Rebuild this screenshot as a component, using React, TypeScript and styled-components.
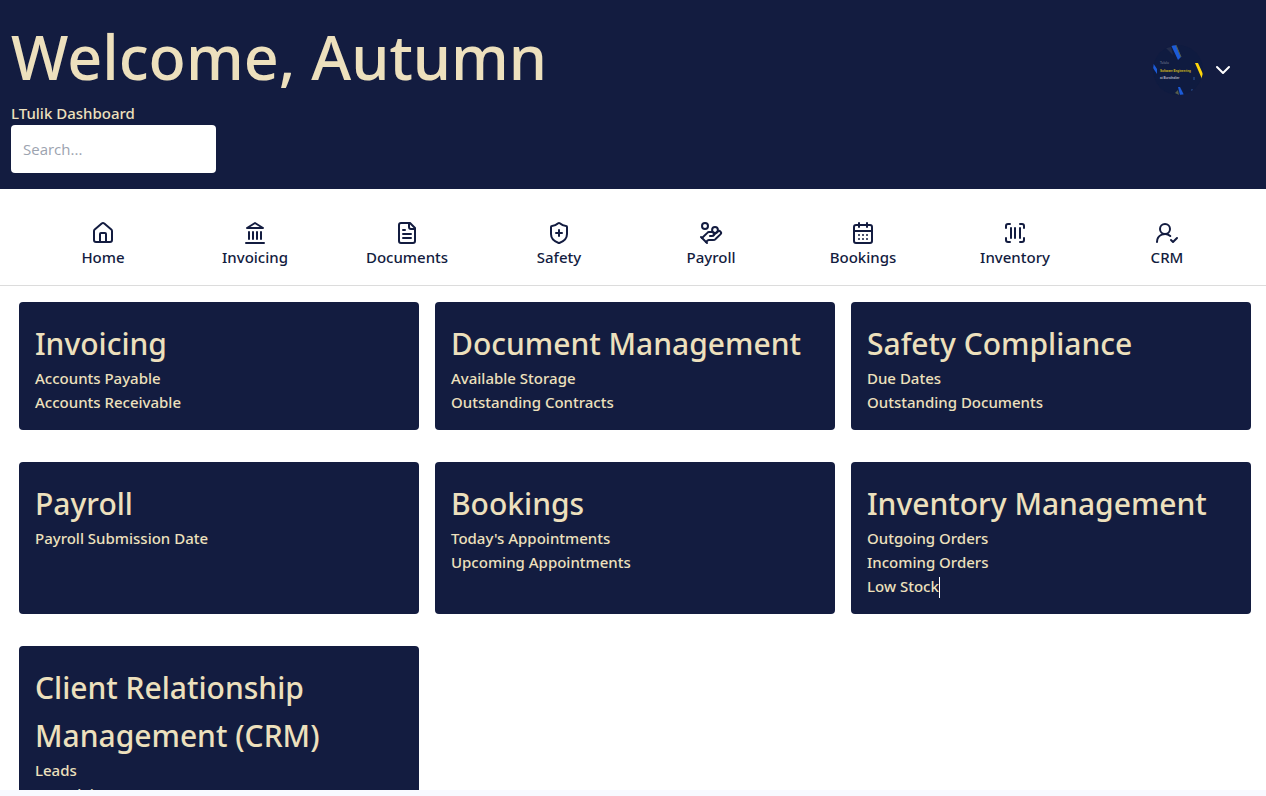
import React from "react";
import styled, { createGlobalStyle } from "styled-components";
import {
  CalendarDays,
  ChevronDown,
  HandCoins,
  ScanBarcode,
  ShieldPlus,
  UserRoundCheck,
} from "lucide-react";

const navy = "#131c40";
const cream = "#ede0bd";

const GlobalStyle = createGlobalStyle`
  *, *::before, *::after { box-sizing: border-box; }
  body {
    margin: 0;
    background: #fff;
    color: ${navy};
    font-family: "Segoe UI", "Noto Sans", sans-serif;
    font-size: 15px;
    line-height: 24px;
    font-weight: 500;
  }
`;

const Page = styled.div`
  display: flex;
  flex-direction: column;
  height: 100vh;
`;

const Header = styled.header`
  display: flex;
  justify-content: space-between;
  align-items: flex-start;
  padding: 13px 31px 16px 11px;
  background: ${navy};
  color: ${cream};
`;

const Intro = styled.div`
  display: flex;
  flex-direction: column;
  align-items: flex-start;
`;

const Welcome = styled.h1`
  margin: 0;
  font-size: 61px;
  line-height: 88px;
  font-weight: 500;
`;

const Search = styled.input`
  width: 205px;
  height: 48px;
  padding: 0 12px;
  border: 0;
  border-radius: 4px;
  background: #fff;
  color: ${navy};
  font-family: "Segoe UI", "Open Sans", sans-serif;
  font-size: 15px;
  font-weight: 400;
  &::placeholder { color: #9ca3af; opacity: 1; }
`;

const Account = styled.button`
  display: flex;
  align-items: center;
  gap: 8px;
  margin-top: 32px;
  padding: 0;
  border: 0;
  background: none;
  color: #fff;
  cursor: pointer;
`;

const Nav = styled.nav`
  display: grid;
  grid-template-columns: repeat(8, 1fr);
  padding: 32px 23px 16px 27px;
  border-bottom: 1px solid #dcdcdc;
`;

const NavLink = styled.a`
  display: flex;
  flex-direction: column;
  align-items: center;
  color: inherit;
  text-decoration: none;
`;

const Cards = styled.main`
  flex: 1;
  min-height: 0;
  overflow: hidden;
  display: grid;
  grid-template-columns: repeat(3, 1fr);
  align-content: start;
  gap: 32px 16px;
  padding: 16px 15px 0 19px;
`;

const Card = styled.section`
  padding: 18px 16px 16px;
  border-radius: 4px;
  background: ${navy};
  color: ${cream};
`;

const CardTitle = styled.h2`
  margin: 0 0 -2px;
  font-size: 30px;
  line-height: 48px;
  font-weight: 500;
`;

const List = styled.ul`
  margin: 0;
  padding: 0;
  list-style: none;
`;

const Caret = styled.span`
  display: inline-block;
  width: 1px;
  height: 21px;
  vertical-align: middle;
  background: #fff;
`;

const Footer = styled.footer`
  flex: none;
  height: 6px;
  background: #f8f9ff;
`;

const Glyph = ({ children }: { children: React.ReactNode }) => (
  <svg width="24" height="24" viewBox="0 0 24 24" fill="none" stroke="currentColor"
    strokeWidth="2" strokeLinecap="round" strokeLinejoin="round" aria-hidden="true">
    {children}
  </svg>
);

const HomeIcon = () => (
  <Glyph>
    <path d="M15 21v-8a1 1 0 0 0-1-1h-4a1 1 0 0 0-1 1v8" />
    <path d="M3 10a2 2 0 0 1 .709-1.528l7-5.999a2 2 0 0 1 2.582 0l7 5.999A2 2 0 0 1 21 10v9a2 2 0 0 1-2 2H5a2 2 0 0 1-2-2z" />
  </Glyph>
);

const BankIcon = () => (
  <Glyph>
    <path d="M3 22h18M6 18v-7M10 18v-7M14 18v-7M18 18v-7" />
    <path d="M12 2l8 5H4z" />
  </Glyph>
);

const DocumentIcon = () => (
  <Glyph>
    <path d="M15 2H6a2 2 0 0 0-2 2v16a2 2 0 0 0 2 2h12a2 2 0 0 0 2-2V7Z" />
    <path d="M14 2v4a2 2 0 0 0 2 2h4M10 9H8M16 13H8M16 17H8" />
  </Glyph>
);

const Avatar = () => (
  <svg width="50" height="50" viewBox="0 0 50 50" aria-hidden="true">
    <defs>
      <clipPath id="avatar"><circle cx="25" cy="25" r="25" /></clipPath>
    </defs>
    <g clipPath="url(#avatar)">
      <rect width="50" height="50" fill="#0f1b40" />
      <path d="M13 3l5-1 2 8z" fill="#232c4b" />
      <path d="M18 0h5l5 12-3 3z" fill="#1c5bd8" />
      <path d="M23 0l5 12" stroke="#59604a" strokeWidth="1" />
      <path d="M0 18l4 6v5l-4-6z" fill="#1c5bd8" />
      <path d="M42 18h3l5 11-1 5z" fill="#ffd60a" />
      <path d="M25 42h2l4 8h-4z" fill="#1c5bd8" />
      <path d="M22 48l3-3 1 5z" fill="#565c4b" />
      <path d="M41 32v3M39 44v2" stroke="#31589d" strokeWidth="1" />
      <g fontFamily="Liberation Sans, sans-serif" fontWeight="700">
        <text x="7" y="19" fontSize="3" fill="#5e6880">Tululu</text>
        <text x="7" y="27" fontSize="3" fill="#d6bd18">Software Engineering</text>
        <text x="7" y="34" fontSize="3" fill="#b3b8c4">at Bursthalter</text>
      </g>
    </g>
  </svg>
);

const navItems = [
  { label: "Home", icon: <HomeIcon /> },
  { label: "Invoicing", icon: <BankIcon /> },
  { label: "Documents", icon: <DocumentIcon /> },
  { label: "Safety", icon: <ShieldPlus size={24} /> },
  { label: "Payroll", icon: <HandCoins size={24} /> },
  { label: "Bookings", icon: <CalendarDays size={24} /> },
  { label: "Inventory", icon: <ScanBarcode size={24} /> },
  { label: "CRM", icon: <UserRoundCheck size={24} /> },
];

const cards = [
  { title: "Invoicing", items: ["Accounts Payable", "Accounts Receivable"] },
  { title: "Document Management", items: ["Available Storage", "Outstanding Contracts"] },
  { title: "Safety Compliance", items: ["Due Dates", "Outstanding Documents"] },
  { title: "Payroll", items: ["Payroll Submission Date"] },
  { title: "Bookings", items: ["Today's Appointments", "Upcoming Appointments"] },
  { title: "Inventory Management", items: ["Outgoing Orders", "Incoming Orders", "Low Stock"] },
  { title: "Client Relationship Management (CRM)", items: ["Leads", "Complaints"] },
];

export default function App() {
  return (
    <Page>
      <GlobalStyle />
      <Header>
        <Intro>
          <Welcome>Welcome, Autumn</Welcome>
          <label htmlFor="search">LTulik Dashboard</label>
          <Search id="search" type="search" placeholder="Search..." />
        </Intro>
        <Account type="button" aria-label="Account menu">
          <Avatar />
          <ChevronDown size={24} />
        </Account>
      </Header>
      <Nav>
        {navItems.map(({ label, icon }) => (
          <NavLink key={label} href="#">
            {icon}
            {label}
          </NavLink>
        ))}
      </Nav>
      <Cards>
        {cards.map(({ title, items }) => (
          <Card key={title}>
            <CardTitle>{title}</CardTitle>
            <List>
              {items.map((item) => (
                <li key={item}>
                  {item}
                  {item === "Low Stock" && <Caret />}
                </li>
              ))}
            </List>
          </Card>
        ))}
      </Cards>
      <Footer />
    </Page>
  );
}
